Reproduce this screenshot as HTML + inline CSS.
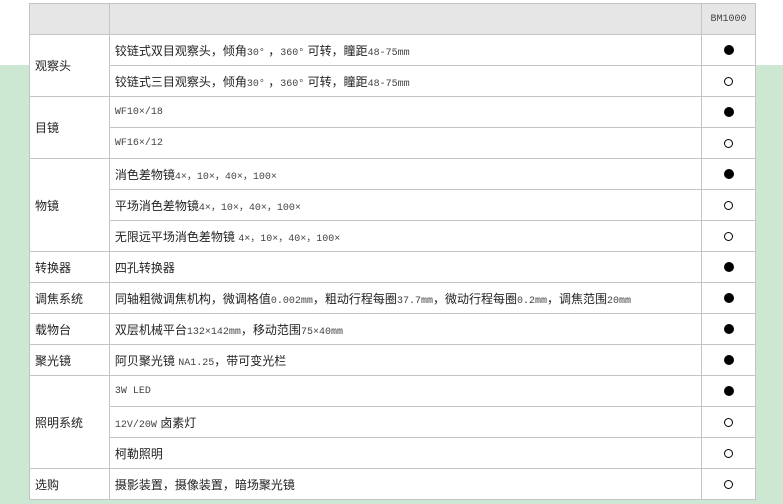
<html><head><style>
body{margin:0;width:783px;height:504px;overflow:hidden;background:#fff;position:relative;font-family:"Liberation Sans","Noto Sans CJK SC",sans-serif;}
.g{position:absolute;left:0;top:65px;width:783px;height:439px;background:#cde8d2;}
table{position:absolute;left:29px;top:3px;border-collapse:collapse;width:727px;font-size:12px;color:#222;}
tr{height:31px;}
td{border:1px solid #c4c4c4;background:#fff;padding:0 0 0 5px;box-sizing:border-box;}
tr.h td{background:#e6e6e6;}
td.c{text-align:center;padding:0;}
.m{font-family:"Liberation Mono",monospace;font-size:10px;color:#444;}
.f,.o{display:inline-block;border-radius:50%;vertical-align:middle;}
.f{width:10px;height:10px;background:#000;}
.o{width:7px;height:7px;border:1px solid #000;}
</style></head><body><div class="g"></div>
<table>
<tr class="h"><td style="width:80px"></td><td style="width:593px"></td><td class="c" style="width:54px"><span class="m">BM1000</span></td></tr>
<tr><td rowspan="2">观察头</td><td>铰链式双目观察头，倾角<span class="m">30°</span> ，<span class="m">360°</span> 可转，瞳距<span class="m">48-75mm</span></td><td class="c"><i class="f"></i></td></tr>
<tr><td>铰链式三目观察头，倾角<span class="m">30°</span> ，<span class="m">360°</span> 可转，瞳距<span class="m">48-75mm</span></td><td class="c"><i class="o"></i></td></tr>
<tr><td rowspan="2">目镜</td><td><span class="m">WF10×/18</span></td><td class="c"><i class="f"></i></td></tr>
<tr><td><span class="m">WF16×/12</span></td><td class="c"><i class="o"></i></td></tr>
<tr><td rowspan="3">物镜</td><td>消色差物镜<span class="m">4×，10×，40×，100×</span></td><td class="c"><i class="f"></i></td></tr>
<tr><td>平场消色差物镜<span class="m">4×，10×，40×，100×</span></td><td class="c"><i class="o"></i></td></tr>
<tr><td>无限远平场消色差物镜 <span class="m">4×，10×，40×，100×</span></td><td class="c"><i class="o"></i></td></tr>
<tr><td>转换器</td><td>四孔转换器</td><td class="c"><i class="f"></i></td></tr>
<tr><td>调焦系统</td><td>同轴粗微调焦机构，微调格值<span class="m">0.002mm</span>，粗动行程每圈<span class="m">37.7mm</span>，微动行程每圈<span class="m">0.2mm</span>，调焦范围<span class="m">20mm</span></td><td class="c"><i class="f"></i></td></tr>
<tr><td>载物台</td><td>双层机械平台<span class="m">132×142mm</span>，移动范围<span class="m">75×40mm</span></td><td class="c"><i class="f"></i></td></tr>
<tr><td>聚光镜</td><td>阿贝聚光镜 <span class="m">NA1.25</span>，带可变光栏</td><td class="c"><i class="f"></i></td></tr>
<tr><td rowspan="3">照明系统</td><td><span class="m">3W LED</span></td><td class="c"><i class="f"></i></td></tr>
<tr><td><span class="m">12V/20W</span> 卤素灯</td><td class="c"><i class="o"></i></td></tr>
<tr><td>柯勒照明</td><td class="c"><i class="o"></i></td></tr>
<tr><td>选购</td><td>摄影装置，摄像装置，暗场聚光镜</td><td class="c"><i class="o"></i></td></tr>
</table></body></html>
